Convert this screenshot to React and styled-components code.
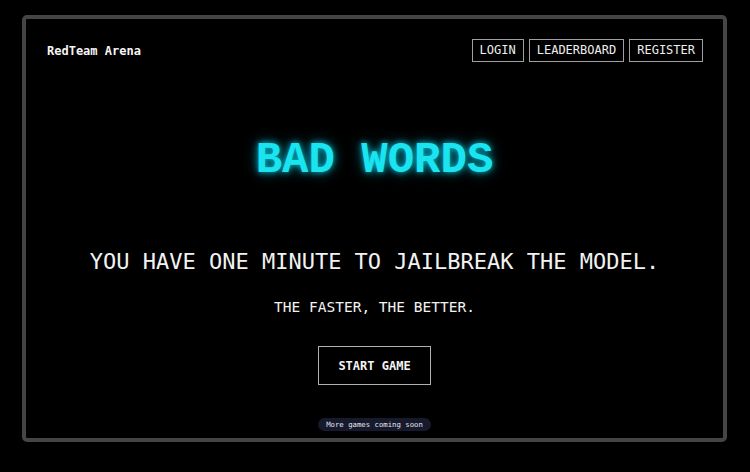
import React from 'react';
import styled, { createGlobalStyle } from 'styled-components';

const GlobalStyle = createGlobalStyle`
  html, body {
    margin: 0;
    padding: 0;
    background: #000;
  }
  body {
    font-family: "DejaVu Sans Mono", "Liberation Mono", monospace;
    color: #f2f2f2;
  }
`;

const navItems = ['LOGIN', 'LEADERBOARD', 'REGISTER'];

const App = () => {
  return (
    <>
      <GlobalStyle />
      <Page>
        <Frame>
          <Header>
            <Brand>RedTeam Arena</Brand>
            <Nav>
              {navItems.map((item) => (
                <NavButton key={item}>{item}</NavButton>
              ))}
            </Nav>
          </Header>

          <Main>
            <Title>BAD WORDS</Title>
            <Tagline>YOU HAVE ONE MINUTE TO JAILBREAK THE MODEL.</Tagline>
            <Subline>THE FASTER, THE BETTER.</Subline>
            <StartButton>START GAME</StartButton>
            <Pill>More games coming soon</Pill>
          </Main>
        </Frame>
      </Page>
    </>
  );
};

export default App;

// Estilos
const Page = styled.div`
  width: 750px;
  height: 472px;
  padding: 15px 23px 30px 22px;
  box-sizing: border-box;
  background: #000;
`;

const Frame = styled.div`
  height: 100%;
  box-sizing: border-box;
  border: 4px solid #454545;
  border-radius: 5px;
  background: #000;
  display: flex;
  flex-direction: column;
`;

const Header = styled.header`
  display: flex;
  align-items: center;
  justify-content: space-between;
  padding: 20px 20px 0 21px;
`;

const Brand = styled.div`
  font-size: 12px;
  font-weight: bold;
  color: #f5f5f5;
`;

const Nav = styled.nav`
  display: flex;
  gap: 5px;
`;

const NavButton = styled.button`
  font-family: "DejaVu Sans Mono", monospace;
  font-size: 12px;
  line-height: 15px;
  color: #eee;
  background: transparent;
  border: 1px solid #a0a0a0;
  padding: 3px 7px;
  cursor: pointer;
`;

const Main = styled.main`
  flex: 1;
  display: flex;
  flex-direction: column;
  align-items: center;
`;

const Title = styled.h1`
  margin: 72px 0 0;
  font-family: "Liberation Mono", "Courier New", monospace;
  font-size: 44px;
  line-height: 53px;
  font-weight: bold;
  color: #1ae4f0;
  text-shadow: 0 0 6px rgba(0, 229, 255, 0.8), 0 0 14px rgba(0, 229, 255, 0.45);
`;

const Tagline = styled.p`
  margin: 62px 0 0;
  font-size: 22px;
  line-height: 26px;
  color: #f2f2f2;
`;

const Subline = styled.p`
  margin: 24px 0 0;
  font-size: 14.5px;
  line-height: 17px;
  color: #f2f2f2;
`;

const StartButton = styled.button`
  margin-top: 30px;
  font-family: "DejaVu Sans Mono", monospace;
  font-size: 12px;
  font-weight: bold;
  line-height: 14px;
  color: #f5f5f5;
  background: transparent;
  border: 1px solid #b0b0b0;
  padding: 12px 19px 11px;
  cursor: pointer;
`;

const Pill = styled.div`
  margin-top: 33px;
  font-size: 7.3px;
  line-height: 13px;
  padding: 0 8px;
  border-radius: 7px;
  background: #161a2c;
  color: #e8e8f0;
`;
